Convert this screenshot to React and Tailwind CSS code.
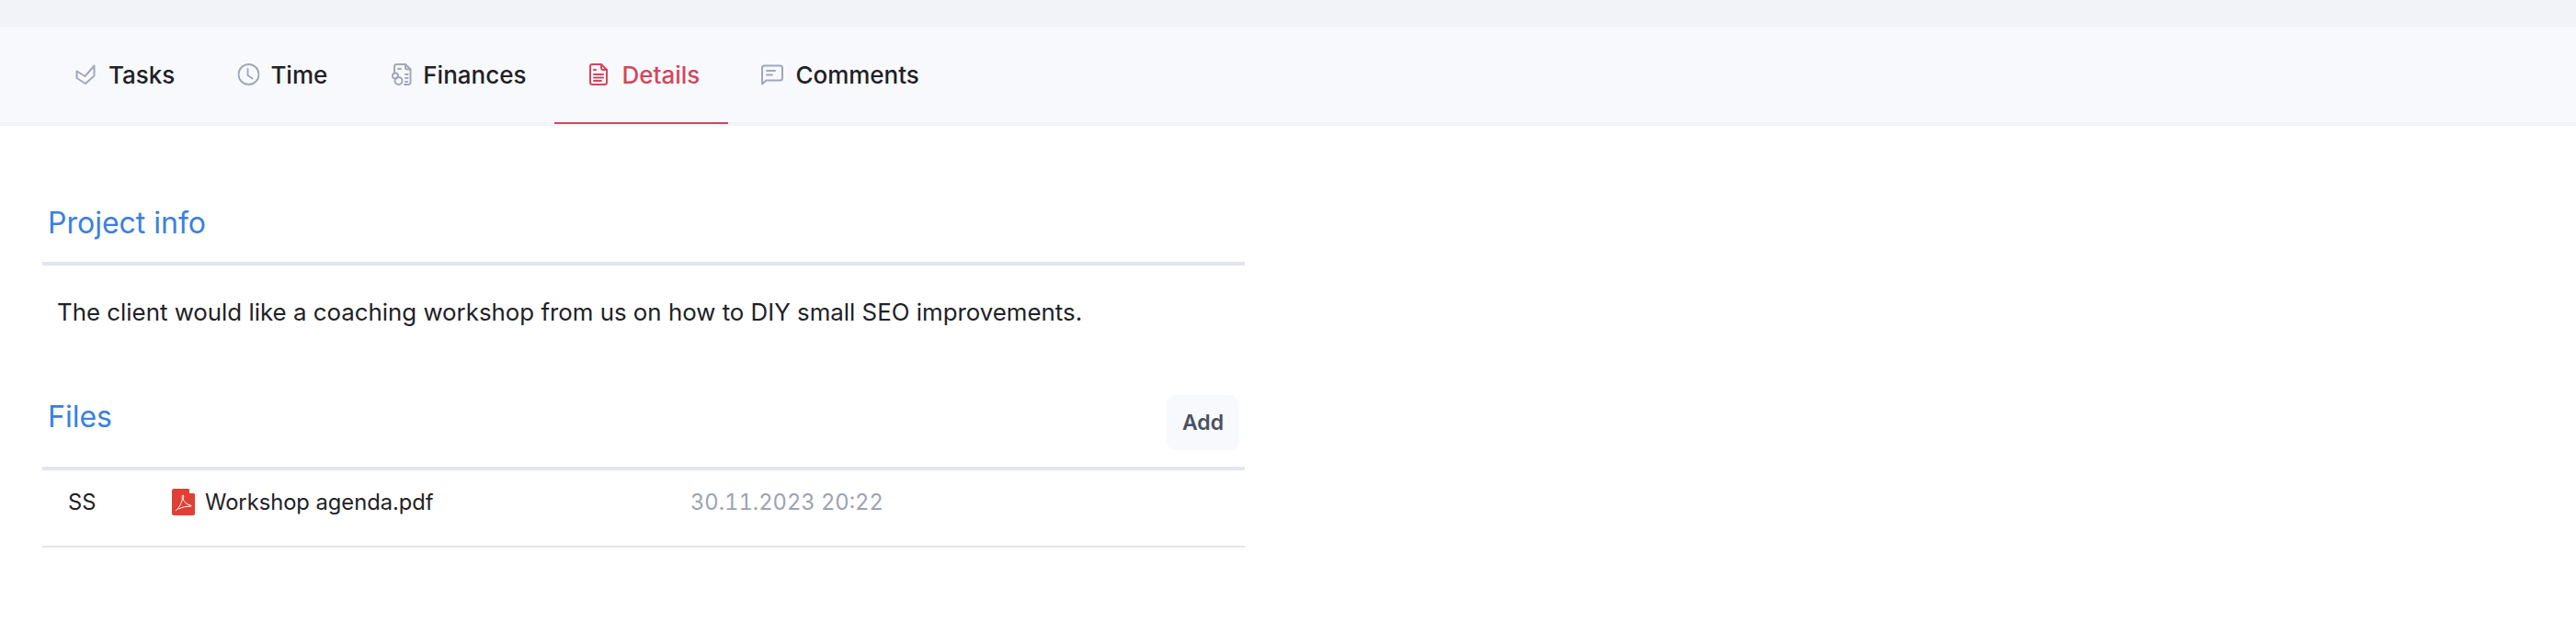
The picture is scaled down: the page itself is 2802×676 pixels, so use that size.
const tabs = [
  { label: "Tasks", icon: TasksIcon },
  { label: "Time", icon: TimeIcon },
  { label: "Finances", icon: FinancesIcon },
  { label: "Details", icon: DetailsIcon, active: true },
  { label: "Comments", icon: CommentsIcon },
];

function TasksIcon() {
  return (
    <svg viewBox="0 0 24 24" className="h-6 w-6" fill="none" stroke="currentColor" strokeWidth="2" strokeLinejoin="round">
      <path d="M2.500 8.500 11.500 14 21.500 2.500V13.500L12 22 2.500 16Z" />
    </svg>
  );
}

function TimeIcon() {
  return (
    <svg viewBox="0 0 24 24" className="h-6 w-6 translate-x-[1.5px]" fill="none" stroke="currentColor" strokeWidth="1.900" strokeLinecap="round" strokeLinejoin="round">
      <circle cx="12" cy="12" r="11" />
      <path d="M11 6v7l5 3.500" />
    </svg>
  );
}

function FinancesIcon() {
  return (
    <svg viewBox="0 0 24 24" className="h-6 w-6 translate-x-[2px]" fill="none" stroke="currentColor" strokeWidth="2" strokeLinecap="round" strokeLinejoin="round">
      <path d="M4 10V3.500C4 2 5 1 6.500 1H16l5.500 5.500V20.500C21.500 22 20.500 23 19 23H15" />
      <path d="M16 1v3.500C16 5.800 17 6.500 18 6.500h3.500" />
      <path d="M8 6h3M16 12h2.500M16 16h2.500M16 20h2" />
      <circle cx="5" cy="13.500" r="3" />
      <circle cx="8.500" cy="19" r="4" />
    </svg>
  );
}

function DetailsIcon() {
  return (
    <svg viewBox="0 0 24 24" className="h-6 w-6" fill="none" stroke="currentColor" strokeWidth="2" strokeLinecap="round" strokeLinejoin="round">
      <path d="M15 1H5C3.500 1 3 2 3 3.500v17C3 22 4 23 5.500 23h13c1.500 0 2.500-1 2.500-2.500V7Z" />
      <path d="M15 1v3.500C15 6 16 7 17 7h4" />
      <path d="M7 7h2M7 12h10M7 15.500h10M7 19h8" />
    </svg>
  );
}

function CommentsIcon() {
  return (
    <svg viewBox="0 0 24 24" className="h-6 w-6" fill="none" stroke="currentColor" strokeWidth="2" strokeLinecap="round" strokeLinejoin="round">
      <path d="M1 22.500V5C1 3.500 2 2.500 3.500 2.500h17C22 2.500 23 3.500 23 5v11c0 1.500-1 2.500-2.500 2.500H5.500Z" />
      <path d="M6 8h9M6 12.500h6" />
    </svg>
  );
}

function PdfIcon() {
  return (
    <svg viewBox="0 0 25 29" className="h-[29px] w-[25px]">
      <path d="M2 0H18L25 6V27C25 28 24 29 23 29H2C1 29 0 28 0 27V2C0 1 1 0 2 0Z" fill="#df4035" />
      <path d="M19 0 25 5H19Z" fill="#ffffff" />
      <path
        d="M4 24C7 22 10 17 11.500 11C11 9 11 7 12 7C13 7 13 9 12 11C13.500 15 16 17 20 18C21.500 18.500 21.500 19.300 20 19.200C16 19 11 20 7.500 22"
        fill="none"
        stroke="#ffffff"
        strokeWidth="1"
      />
    </svg>
  );
}

function SectionHeading({ children }) {
  return <h2 className="pl-[6px] text-[32px] font-normal leading-[40px] text-[#3a80de]">{children}</h2>;
}

export default function App() {
  return (
    <div className="min-h-[676px] bg-white font-['Inter',sans-serif] text-[#1f2126]">
      <div className="h-[29px] bg-[#f1f3f8]" />
      <nav className="flex h-[108px] border-b-4 border-[#f1f3f8] bg-[#f8f9fd] pl-[45px]">
        {tabs.map((tab) => (
          <a
            key={tab.label}
            className={`-mb-[2px] flex h-[106px] items-center gap-[13px] border-b-2 pl-[36px] pr-[31px] text-[26px] font-medium ${
              tab.active ? "border-[#d4465c] text-[#d4465c]" : "border-transparent"
            }`}
          >
            <span className={tab.active ? "text-[#d4465c]" : "text-[#a1a8b8]"}>
              <tab.icon />
            </span>
            {tab.label}
          </a>
        ))}
      </nav>

      <div className="ml-[46px] w-[1308px]">
        <div className="mt-[86px] border-b-4 border-[#e3e5ef] pb-[22px]">
          <SectionHeading>Project info</SectionHeading>
        </div>
        <p className="pl-[16px] pt-[35px] text-[25.850px] leading-[32px]">
          The client would like a coaching workshop from us on how to DIY small SEO improvements.
        </p>

        <div className="mt-[74px] flex items-start justify-between border-b-4 border-[#e3e5ef] pb-[18px]">
          <div className="pt-[4px]">
            <SectionHeading>Files</SectionHeading>
          </div>
          <button className="mr-[6px] h-[60px] w-[79px] rounded-[10px] bg-[#f8f9fd] text-[23px] font-semibold text-[#4b5060]">
            Add
          </button>
        </div>
        <div className="flex h-[84px] items-center border-b-2 border-[#e3e5ef] pb-[12px] text-[23.700px]">
          <span className="ml-[28px] w-[113px]">SS</span>
          <span className="flex w-[565px] items-center gap-[11px]">
            <PdfIcon />
            Workshop agenda.pdf
          </span>
          <span className="-ml-[1px] tabular-nums text-[#9ca3b4]">30.11.2023 20:22</span>
        </div>
      </div>
    </div>
  );
}
